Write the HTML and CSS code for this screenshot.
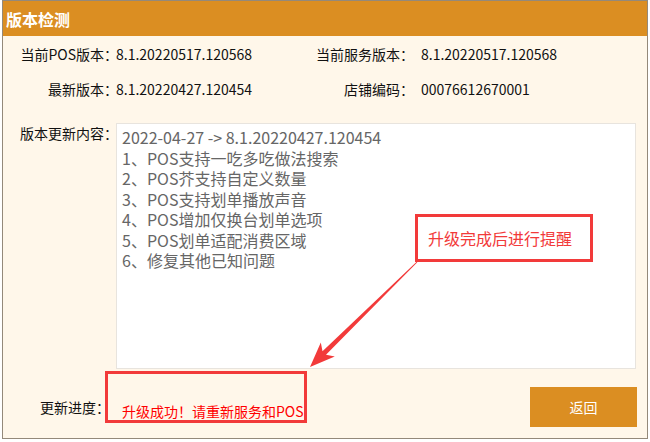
FILE: index.html
```html
<!DOCTYPE html>
<html lang="zh-CN">
  <head>
    <meta charset="UTF-8" />
    <title>版本检测</title>
    <link rel="stylesheet" href="styles.css">
  </head>
  <body>
    <div class="window">
      <div class="titlebar">版本检测</div>

      <div class="info">
        <span class="label">当前POS版本：</span>
        <span class="value">8.1.20220517.120568</span>
        <span class="label">当前服务版本：</span>
        <span class="value far">8.1.20220517.120568</span>
        <span class="label">最新版本：</span>
        <span class="value">8.1.20220427.120454</span>
        <span class="label">店铺编码：</span>
        <span class="value far">00076612670001</span>
      </div>

      <div class="notes-row">
        <span class="label">版本更新内容：</span>
        <div class="notes">2022-04-27 -&gt; 8.1.20220427.120454
1、POS支持一吃多吃做法搜索
2、POS芥支持自定义数量
3、POS支持划单播放声音
4、POS增加仅换台划单选项
5、POS划单适配消费区域
6、修复其他已知问题</div>
      </div>

      <div class="progress-row">
        <span class="label">更新进度：</span>
        <div class="status-box"><span class="status">升级成功！请重新服务和POS</span></div>
        <button class="btn">返回</button>
      </div>

      <!-- 标注 -->
      <div class="callout">升级完成后进行提醒</div>
      <svg class="arrow" width="644" height="437" viewBox="0 0 644 437">
        <polygon points="414.35,261.36 323,353.8 331.8,355.6 307,366 317.8,341.4 319.5,350.2 413.65,260.64" fill="#f23a3a" />
      </svg>
    </div>
  </body>
</html>
```

FILE: styles.css
```css
body {
  margin: 0;
  background-color: #fff;
  font-family: "Noto Sans CJK SC", sans-serif;
  color: #111;
}

.window {
  position: relative;
  margin-left: 2px;
  width: 644px;
  height: 437px;
  border: 1px solid #94897a;
  background-color: #fff7ea;
}

.titlebar {
  height: 33px;
  padding: 2px 0 0 3px;
  line-height: 33px;
  background-color: #db8e22;
  color: #fff;
  font-size: 16px;
  font-weight: bold;
}

.label {
  text-align: right;
  font-size: 14px;
  white-space: nowrap;
}

/* 版本信息 */
.info {
  display: grid;
  grid-template-columns: 115px 176px 120px auto;
  grid-auto-rows: 35px;
  align-items: center;
  font-size: 14px;
}

.value {
  margin-left: -2px;
}

.value.far {
  margin-left: 0;
  padding-left: 7px;
}

/* 更新内容 */
.notes-row {
  display: flex;
  margin-top: 17px;
}

.notes-row .label {
  width: 115px;
  line-height: 20px;
}

.notes {
  box-sizing: border-box;
  width: 520px;
  height: 246px;
  margin-left: -2px;
  padding: 3px 5px;
  border: 1px solid #e8e4de;
  background-color: #fff;
  color: #666;
  font-size: 16px;
  line-height: 20.5px;
  white-space: pre-line;
}

/* 进度 */
.progress-row {
  display: flex;
  align-items: center;
  height: 40px;
  margin-top: 18px;
}

.progress-row .label {
  width: 107px;
}

.status-box {
  box-sizing: border-box;
  width: 202px;
  height: 52px;
  margin: 0 0 20px -5px;
  padding: 24px 0 0 14px;
  border: 3px solid #f23a3a;
}

.status {
  color: #f00;
  font-size: 14px;
  line-height: 18px;
}

.btn {
  width: 107px;
  height: 40px;
  margin-left: auto;
  margin-right: 10px;
  border: none;
  background-color: #db8e22;
  color: #fff;
  font-family: inherit;
  font-size: 14px;
}

.callout {
  position: absolute;
  left: 412px;
  top: 213px;
  box-sizing: border-box;
  width: 178px;
  height: 48px;
  padding-left: 10px;
  display: flex;
  align-items: center;
  border: 3px solid #f23a3a;
  color: #f23a3a;
  font-size: 16px;
}

.arrow {
  position: absolute;
  left: 0;
  top: 0;
  pointer-events: none;
}
```
